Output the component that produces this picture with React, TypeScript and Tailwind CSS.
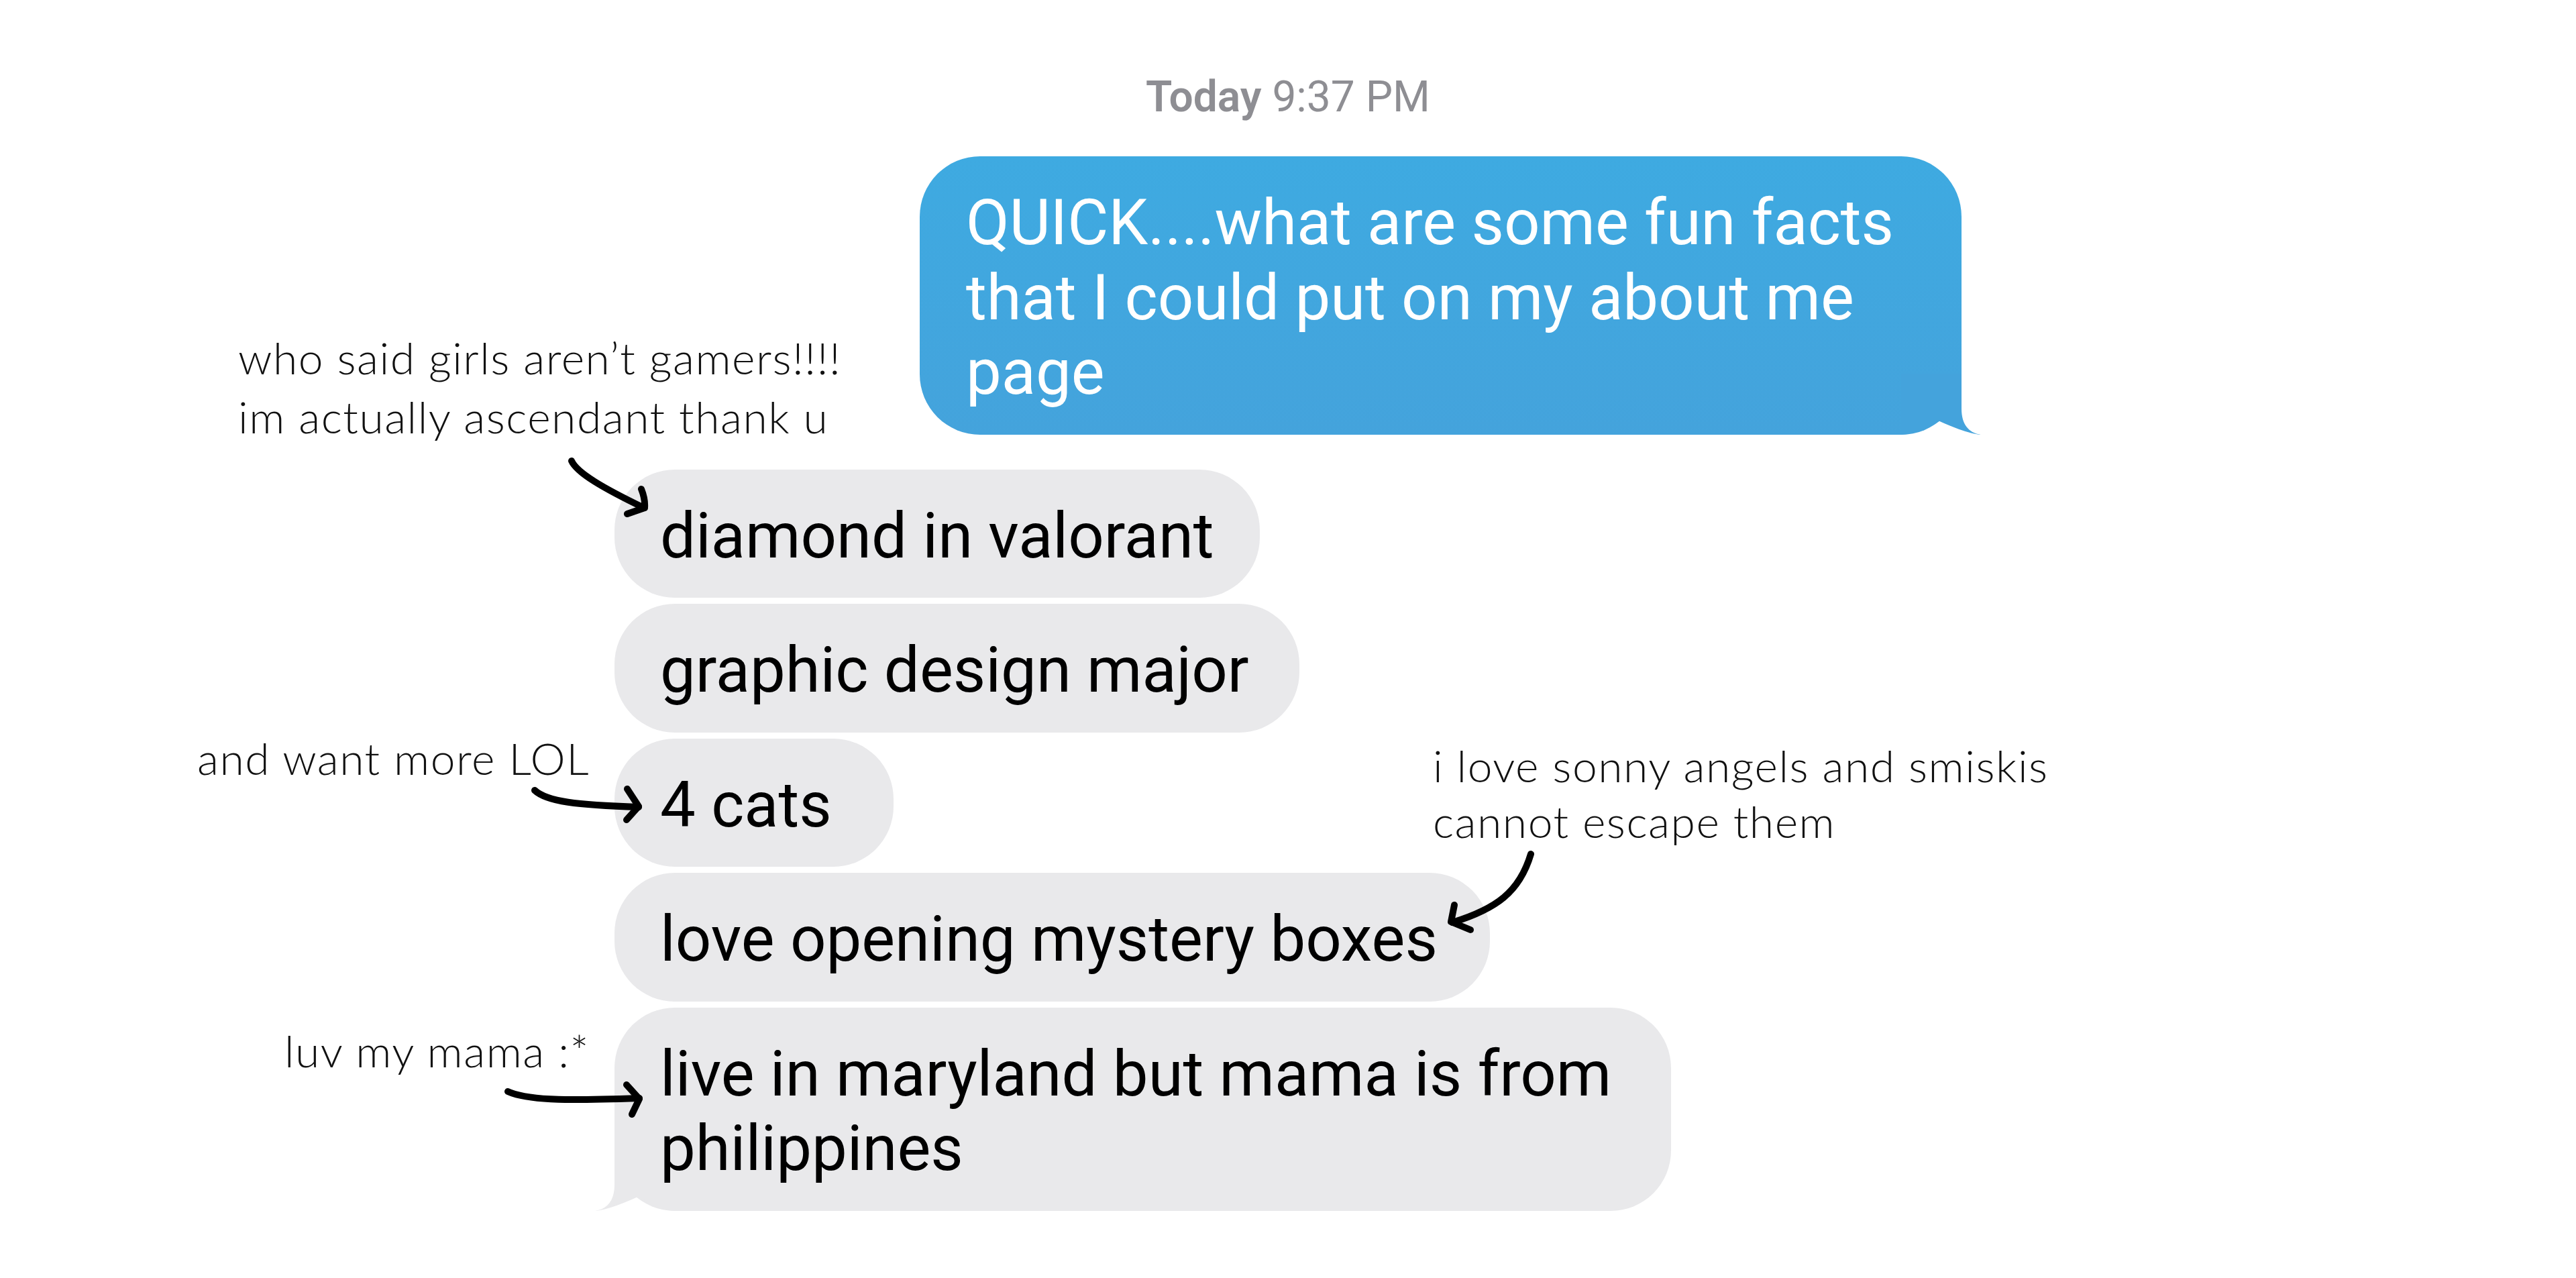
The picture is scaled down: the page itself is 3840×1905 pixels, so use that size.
import * as React from "react";

// ── Data ─────────────────────────────────────────────────────────────────────

const FACTS: { lines: string[]; width: string }[] = [
  { lines: ["diamond in valorant"], width: "w-[962px]" },
  { lines: ["graphic design major"], width: "w-[1021px]" },
  { lines: ["4 cats"], width: "w-[416px]" },
  { lines: ["love opening mystery boxes"], width: "w-[1305px]" },
  { lines: ["live in maryland but mama is from", "philippines"], width: "w-[1575px]" },
];

const NOTE = "absolute font-['Lato','Open_Sans',sans-serif] font-light text-[66px] tracking-[1.5px] text-[#111]";

// ── Bubble tail (iMessage style) ─────────────────────────────────────────────

function Tail({ fill, flip }: { fill: string; flip?: boolean }) {
  return (
    <svg
      viewBox="0 0 120 91"
      className={
        flip
          ? "absolute left-[-30px] bottom-0 w-[120px] h-[91px] -scale-x-100"
          : "absolute right-[-30px] bottom-0 w-[120px] h-[91px]"
      }
    >
      <path
        d="M0 0 H90 V52 C90 75 100 88 119 91 C101 90 71 77 53 69 C40 80 20 90 0 91 Z"
        fill={fill}
      />
    </svg>
  );
}

// ── Hand-drawn arrows ────────────────────────────────────────────────────────

function Arrows() {
  const arrows = [
    { shaft: "M852 687 C860 705 900 728 960 757", head: "M956 729 Q962 744 961 757 L935 766" },
    { shaft: "M797 1178 C815 1195 860 1200 952 1203", head: "M935 1176 L952 1202 L934 1222" },
    { shaft: "M2282 1273 C2265 1330 2230 1355 2165 1375", head: "M2168 1349 L2163 1374 L2192 1386" },
    { shaft: "M757 1627 C790 1642 860 1640 953 1637", head: "M934 1617 L953 1638 L942 1661" },
  ];
  return (
    <svg
      viewBox="0 0 3840 1905"
      className="absolute inset-0 w-[3840px] h-[1905px] pointer-events-none"
    >
      {arrows.map((a, i) => (
        <g
          key={i}
          fill="none"
          stroke="#000"
          strokeWidth={10}
          strokeLinecap="round"
          strokeLinejoin="round"
        >
          <path d={a.shaft} />
          <path d={a.head} />
        </g>
      ))}
    </svg>
  );
}

// ── Component ────────────────────────────────────────────────────────────────

export default function App() {
  return (
    <div className="relative w-full h-[1905px] bg-white overflow-hidden font-['Roboto','Liberation_Sans',sans-serif]">
      {/* Timestamp */}
      <div className="pt-[109px] text-center text-[64px] leading-[72px] text-[#8e8e93]">
        <span className="font-semibold">Today</span> 9:37 PM
      </div>

      {/* Conversation */}
      <div className="mx-auto w-[2008px] flex flex-col">
        <div className="relative self-end mt-[52px] w-[1553px] rounded-[90px] bg-linear-to-b from-[#3eaae1] to-[#44a3dc] px-[69px] pt-[44px] pb-[36px] text-white text-[94px] leading-[111.5px] whitespace-nowrap">
          <Tail fill="#44a3dc" />
          <div className="relative">
            <div>QUICK....what are some fun facts</div>
            <div>that I could put on my about me</div>
            <div>page</div>
          </div>
        </div>

        <div className="mt-[52px] flex flex-col items-start gap-[9px]">
          {FACTS.map((f, i) => (
            <div
              key={i}
              className={`relative ${f.width} rounded-[90px] bg-[#e9e9eb] px-[68px] pt-[44px] pb-[36px] text-black text-[94px] leading-[111.5px] whitespace-nowrap`}
            >
              {i === FACTS.length - 1 && <Tail fill="#e9e9eb" flip />}
              <div className="relative">
                {f.lines.map((l) => (
                  <div key={l}>{l}</div>
                ))}
              </div>
            </div>
          ))}
        </div>
      </div>

      {/* Annotations */}
      <div className={`${NOTE} left-[355px] top-[489px] leading-[88px]`}>
        <div>who said girls aren’t gamers!!!!</div>
        <div>im actually ascendant thank u</div>
      </div>
      <div className={`${NOTE} left-[294px] top-[1086px] leading-[88px]`}>
        and want more LOL
      </div>
      <div className={`${NOTE} left-[2136px] top-[1099px] leading-[83px]`}>
        <div>i love sonny angels and smiskis</div>
        <div>cannot escape them</div>
      </div>
      <div className={`${NOTE} left-[424px] top-[1522px] leading-[88px]`}>
        luv my mama :*
      </div>

      <Arrows />
    </div>
  );
}
